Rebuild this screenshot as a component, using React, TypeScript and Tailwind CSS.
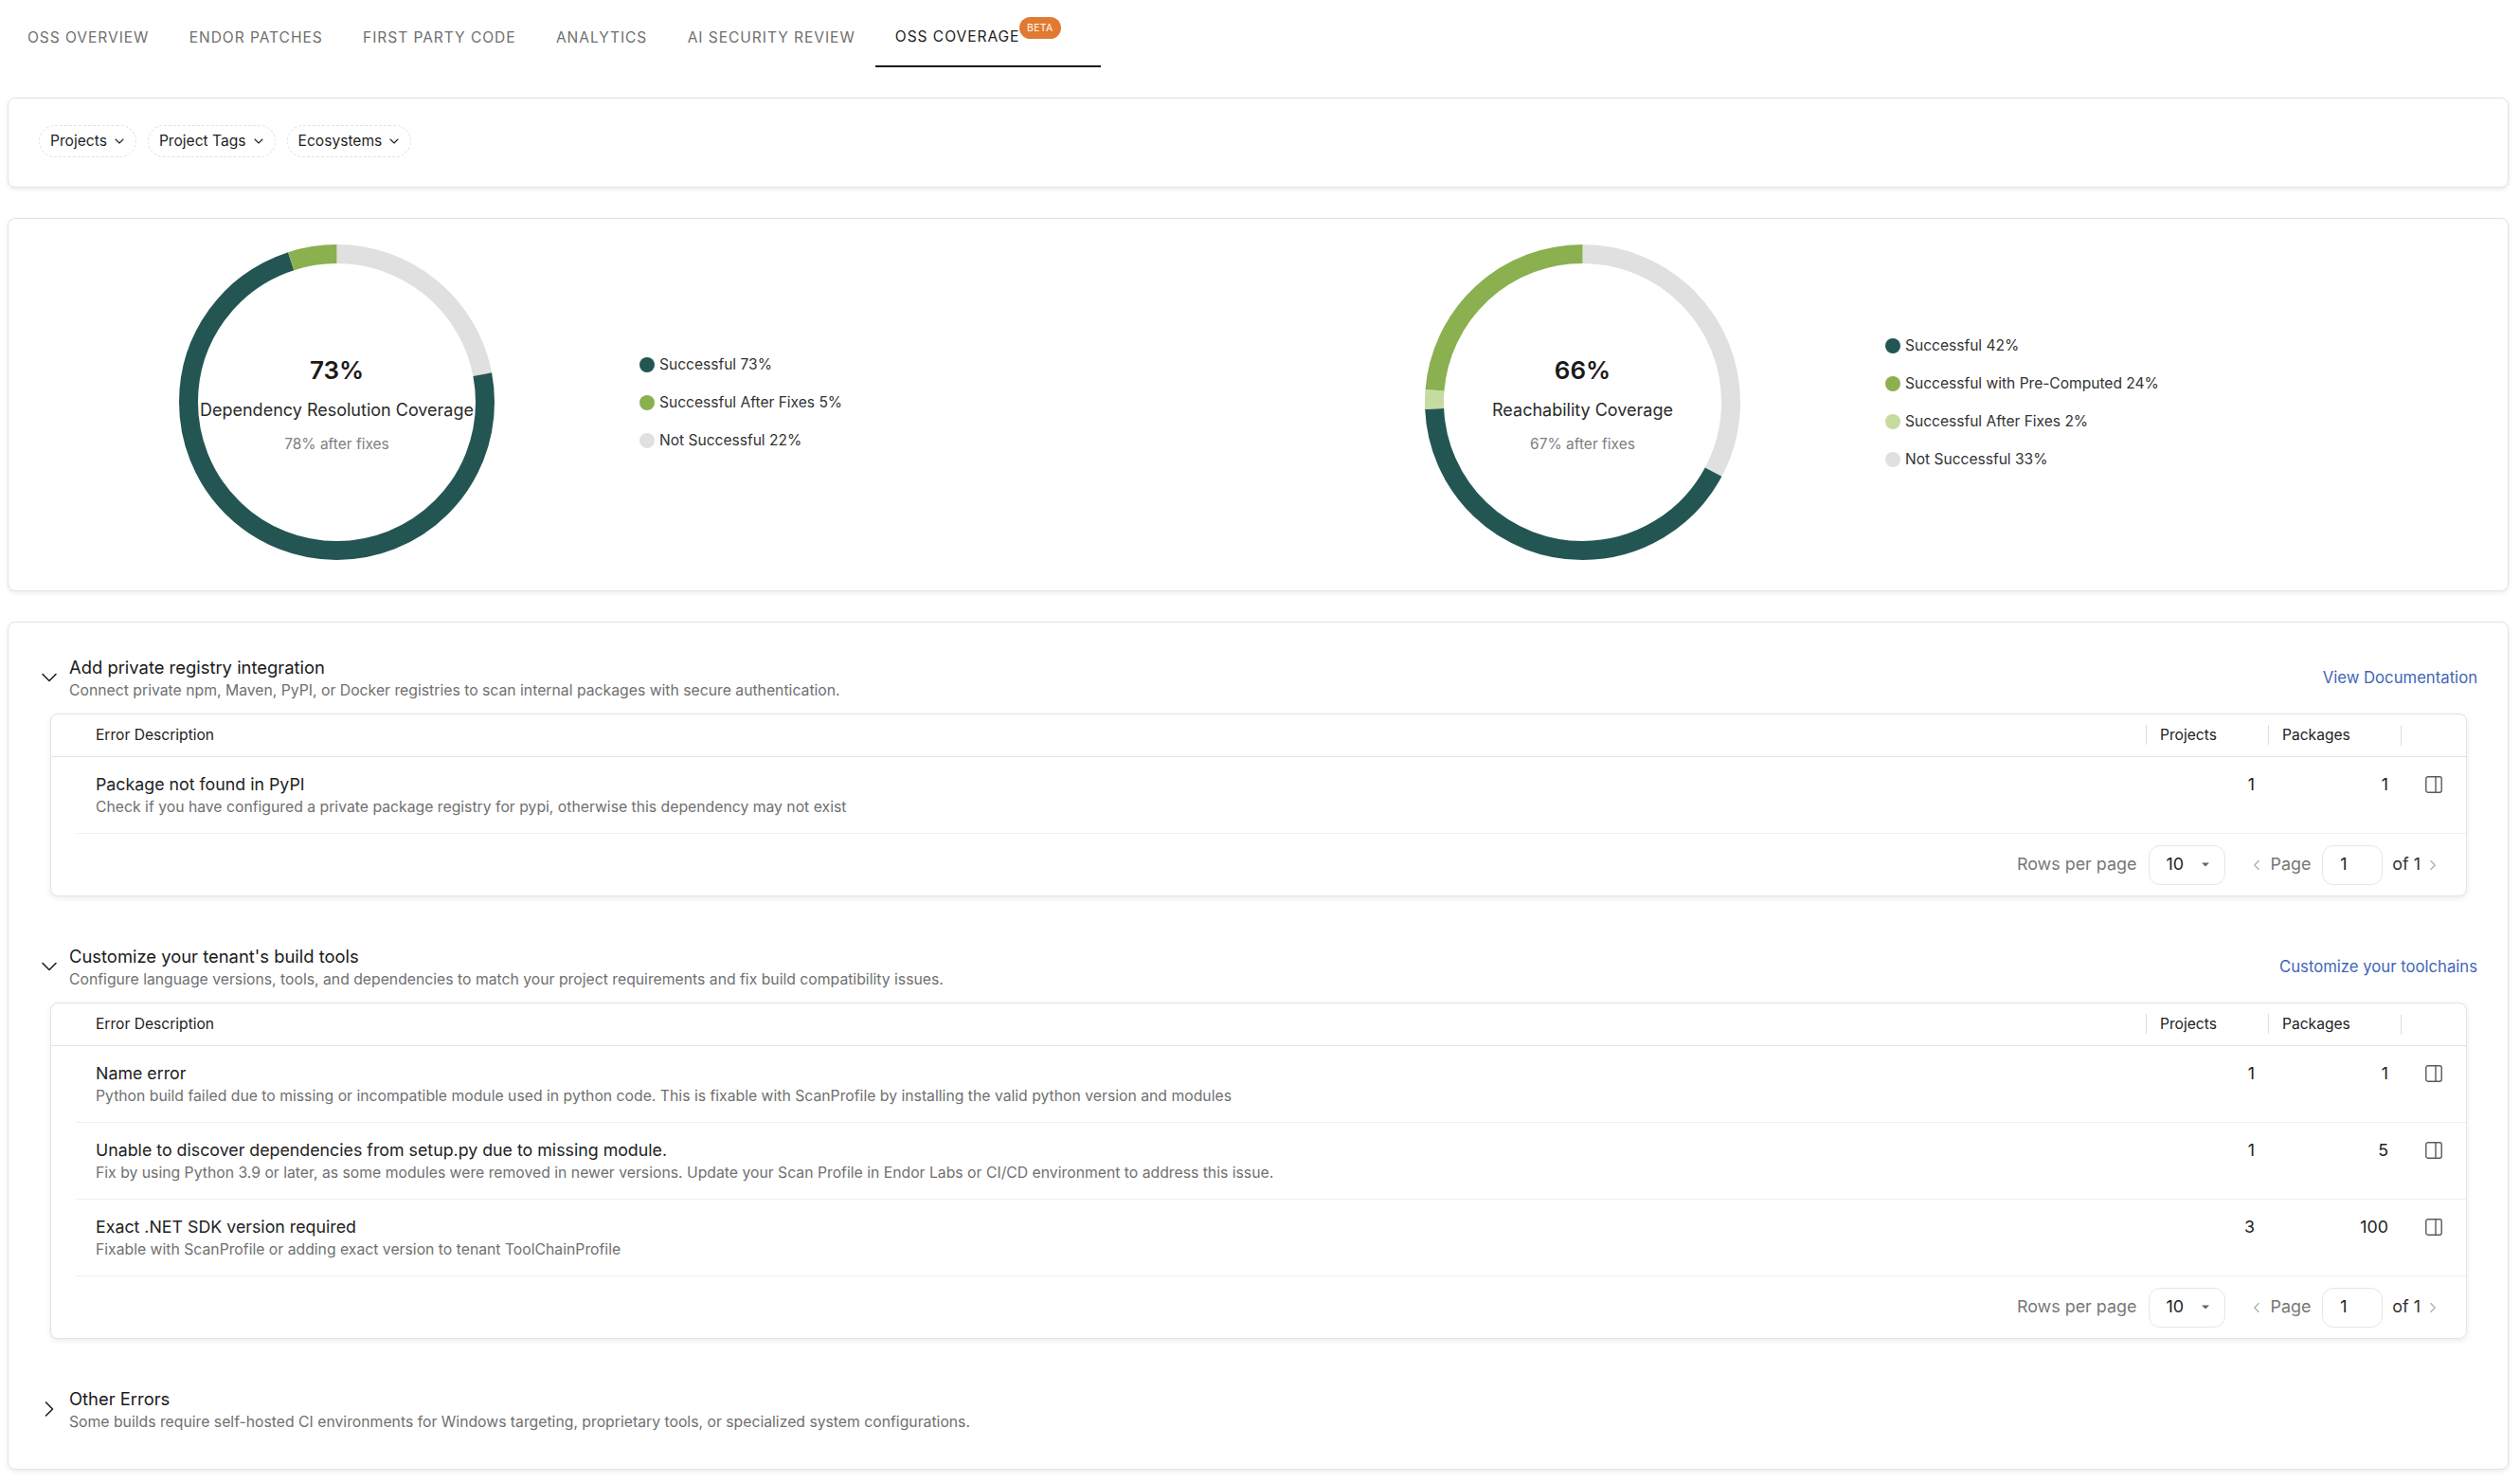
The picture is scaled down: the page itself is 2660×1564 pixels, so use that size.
import React from "react";
import { ChevronDown, ChevronLeft, ChevronRight } from "lucide-react";

const DARK = "#235653";
const GREEN = "#8AB050";
const LIGHT = "#C5DBA0";
const GRAY = "#E0E0E0";

type Seg = { color: string; from: number; to: number };

function Donut({ segs, pct, label, sub }: { segs: Seg[]; pct: string; label: string; sub: string }) {
  return (
    <div className="relative w-[333px] h-[333px] shrink-0">
      <svg width="333" height="333" viewBox="0 0 333 333" className="-rotate-90">
        {segs.map((s, i) => (
          <circle
            key={i}
            cx="166.5"
            cy="166.5"
            r="156.5"
            fill="none"
            stroke={s.color}
            strokeWidth="20"
            pathLength={100}
            strokeDasharray={`${s.to - s.from} ${100 - (s.to - s.from)}`}
            strokeDashoffset={-s.from}
          />
        ))}
      </svg>
      <div className="absolute inset-0 flex flex-col items-center justify-center pt-[4px]">
        <div className="text-[26px] leading-[32px] font-semibold text-[#1a1a1a]">{pct}</div>
        <div className="mt-[14px] text-[18px] leading-[24px] text-[#2a2a2a] whitespace-nowrap">{label}</div>
        <div className="mt-[14px] text-[15.5px] leading-[20px] text-[#808080]">{sub}</div>
      </div>
    </div>
  );
}

function Legend({ items }: { items: { color: string; text: string }[] }) {
  return (
    <div className="flex flex-col gap-[16px]">
      {items.map((it) => (
        <div key={it.text} className="flex items-center gap-[5px] h-[24px] text-[15.55px] text-[#333333] whitespace-nowrap">
          <span className="w-[16px] h-[16px] rounded-full" style={{ background: it.color }} />
          <span>{it.text}</span>
        </div>
      ))}
    </div>
  );
}

function Pill({ text }: { text: string }) {
  return (
    <button className="h-[34px] flex items-center gap-[5px] pl-[11px] pr-[9px] rounded-full border border-dashed border-[#e2e2e2] text-[15.6px] font-normal text-[#1f1f1f] whitespace-nowrap">
      {text}
      <ChevronDown size={16} strokeWidth={1.6} className="text-[#222222]" />
    </button>
  );
}

function PanelIcon() {
  return (
    <svg width="18" height="18" viewBox="0 0 18 18" fill="none" stroke="#5a5a5a" strokeWidth="1.4">
      <rect x="0.8" y="0.8" width="16.4" height="16.4" rx="2" />
      <line x1="11" y1="0.8" x2="11" y2="17.2" />
    </svg>
  );
}

type Row = { title: string; desc: string; projects: number; packages: number };

function Table({ rows }: { rows: Row[] }) {
  return (
    <div className="ml-[44px] mr-[43px] border border-[#e3e3e3] rounded-[8px] bg-white shadow-[0_2px_6px_rgba(0,0,0,0.08)]">
      <div className="h-[45px] flex items-center border-b border-[#e3e3e3] text-[15.6px] text-[#222222]">
        <div className="flex-1 pl-[47px]">Error Description</div>
        <div className="w-[129px] flex items-center gap-[14px]">
          <span className="w-px h-[21px] bg-[#dddddd]" />
          <span>Projects</span>
        </div>
        <div className="w-[140px] flex items-center gap-[14px]">
          <span className="w-px h-[21px] bg-[#dddddd]" />
          <span>Packages</span>
        </div>
        <div className="w-[69px] flex items-center">
          <span className="w-px h-[21px] bg-[#dddddd]" />
        </div>
      </div>
      {rows.map((r) => (
        <div key={r.title} className="ml-[26px] h-[81px] pt-[17px] flex items-start border-b border-[#efefef]">
          <div className="flex-1 pl-[21px]">
            <div className="text-[17.8px] leading-[24px] text-[#222222]">{r.title}</div>
            <div className="text-[15.75px] leading-[24px] text-[#707070]">{r.desc}</div>
          </div>
          <div className="w-[129px] pr-[14px] text-right text-[17.8px] leading-[24px] text-[#222222]">{r.projects}</div>
          <div className="w-[140px] pr-[13px] text-right text-[17.8px] leading-[24px] text-[#222222]">{r.packages}</div>
          <div className="w-[69px] h-[24px] pl-[26px] flex items-center">
            <PanelIcon />
          </div>
        </div>
      ))}
      <div className="h-[65px] flex items-center justify-end pr-[26px] text-[17.9px]">
        <span className="text-[#777777]">Rows per page</span>
        <div className="ml-[13px] w-[81px] h-[42px] rounded-[12px] border border-[#e6e6e6] flex items-center pl-[17px] text-[#222222]">
          <span>10</span>
          <svg width="8" height="5" viewBox="0 0 8 5" className="ml-[19px]">
            <path d="M0 0.5h8L4 4.5z" fill="#666666" />
          </svg>
        </div>
        <ChevronLeft size={18} strokeWidth={1.5} className="ml-[24px] text-[#aaaaaa]" />
        <span className="ml-[5px] text-[#777777]">Page</span>
        <div className="ml-[12px] w-[64px] h-[42px] rounded-[12px] border border-[#e6e6e6] flex items-center pl-[18px] text-[#222222]">1</div>
        <span className="ml-[10px] text-[#333333]">of 1</span>
        <ChevronRight size={18} strokeWidth={1.5} className="ml-[4px] text-[#aaaaaa]" />
      </div>
    </div>
  );
}

function SectionHead({ title, desc, link, open = true }: { title: string; desc: string; link?: string; open?: boolean }) {
  return (
    <div className="flex items-center pl-[29px] pr-[32px] h-[48px]">
      {open ? (
        <ChevronDown size={28} strokeWidth={1.4} className="text-[#222222] shrink-0 -mt-[4px]" />
      ) : (
        <ChevronRight size={28} strokeWidth={1.4} className="text-[#222222] shrink-0 -mt-[4px]" />
      )}
      <div className="flex-1 pl-[7px]">
        <div className="text-[18.4px] leading-[24px] -mt-[1px] text-[#1a1a1a]">{title}</div>
        <div className="text-[15.75px] leading-[25px] text-[#707070]">{desc}</div>
      </div>
      {link && <a className="text-[16.7px] text-[#3F66B8] -mt-[3px]">{link}</a>}
    </div>
  );
}

const tabs = ["OSS OVERVIEW", "ENDOR PATCHES", "FIRST PARTY CODE", "ANALYTICS", "AI SECURITY REVIEW"];

export default function App() {
  return (
    <div
      className="w-[2660px] h-[1564px] bg-white overflow-hidden"
      style={{ fontFamily: "Inter, 'Liberation Sans', sans-serif" }}
    >
      <div className="h-[71px] flex items-stretch pl-[7.5px]">
        {tabs.map((t) => (
          <div key={t} className="px-[21.2px] first:pl-[21.5px] flex items-center pt-[8px] text-[15.55px] tracking-[0.95px] text-[#6f6f6f] whitespace-nowrap">
            {t}
          </div>
        ))}
        <div className="relative w-[238px] pl-[21px] flex items-center pt-[8px] border-b-2 border-[#1a1a1a] text-[15.55px] tracking-[0.95px] text-[#222222] whitespace-nowrap">
          OSS COVERAGE
          <span className="absolute left-[152px] top-[18px] w-[44px] h-[23px] rounded-full bg-[#E17A31] text-white text-[10.5px] tracking-[0.3px] flex items-center justify-center">
            BETA
          </span>
        </div>
      </div>

      <div className="mt-[32px] ml-[8px] w-[2640px] h-[95px] pb-[3px] flex items-center gap-[12px] pl-[32px] bg-white border border-[#e3e3e3] rounded-[8px] shadow-[0_2px_5px_rgba(0,0,0,0.08)]">
        <Pill text="Projects" />
        <Pill text="Project Tags" />
        <Pill text="Ecosystems" />
      </div>

      <div className="mt-[32px] ml-[8px] w-[2640px] h-[394px] pb-[5px] grid grid-cols-[1315px_1fr] items-center bg-white border border-[#e3e3e3] rounded-[8px] shadow-[0_2px_5px_rgba(0,0,0,0.08)]">
        <div className="flex items-center pl-[180px] gap-[153px]">
          <Donut
            pct="73%"
            label="Dependency Resolution Coverage"
            sub="78% after fixes"
            segs={[
              { color: GRAY, from: 0, to: 22 },
              { color: DARK, from: 22, to: 95 },
              { color: GREEN, from: 95, to: 100 },
            ]}
          />
          <Legend
            items={[
              { color: DARK, text: "Successful 73%" },
              { color: GREEN, text: "Successful After Fixes 5%" },
              { color: GRAY, text: "Not Successful 22%" },
            ]}
          />
        </div>
        <div className="flex items-center pl-[180px] gap-[153px]">
          <Donut
            pct="66%"
            label="Reachability Coverage"
            sub="67% after fixes"
            segs={[
              { color: GRAY, from: 0, to: 32.8 },
              { color: DARK, from: 32.8, to: 74.3 },
              { color: LIGHT, from: 74.3, to: 76.3 },
              { color: GREEN, from: 76.3, to: 100 },
            ]}
          />
          <Legend
            items={[
              { color: DARK, text: "Successful 42%" },
              { color: GREEN, text: "Successful with Pre-Computed 24%" },
              { color: LIGHT, text: "Successful After Fixes 2%" },
              { color: GRAY, text: "Not Successful 33%" },
            ]}
          />
        </div>
      </div>

      <div className="mt-[32px] ml-[8px] w-[2640px] h-[895px] pt-[36px] bg-white border border-[#e3e3e3] rounded-[8px] shadow-[0_2px_5px_rgba(0,0,0,0.08)]">
        <SectionHead
          title="Add private registry integration"
          desc="Connect private npm, Maven, PyPI, or Docker registries to scan internal packages with secure authentication."
          link="View Documentation"
        />
        <div className="mt-[12px]">
          <Table
            rows={[
              {
                title: "Package not found in PyPI",
                desc: "Check if you have configured a private package registry for pypi, otherwise this dependency may not exist",
                projects: 1,
                packages: 1,
              },
            ]}
          />
        </div>
        <div className="mt-[52px]">
          <SectionHead
            title="Customize your tenant's build tools"
            desc="Configure language versions, tools, and dependencies to match your project requirements and fix build compatibility issues."
            link="Customize your toolchains"
          />
        </div>
        <div className="mt-[12px]">
          <Table
            rows={[
              {
                title: "Name error",
                desc: "Python build failed due to missing or incompatible module used in python code. This is fixable with ScanProfile by installing the valid python version and modules",
                projects: 1,
                packages: 1,
              },
              {
                title: "Unable to discover dependencies from setup.py due to missing module.",
                desc: "Fix by using Python 3.9 or later, as some modules were removed in newer versions. Update your Scan Profile in Endor Labs or CI/CD environment to address this issue.",
                projects: 1,
                packages: 5,
              },
              {
                title: "Exact .NET SDK version required",
                desc: "Fixable with ScanProfile or adding exact version to tenant ToolChainProfile",
                projects: 3,
                packages: 100,
              },
            ]}
          />
        </div>
        <div className="mt-[52px]">
          <SectionHead
            title="Other Errors"
            desc="Some builds require self-hosted CI environments for Windows targeting, proprietary tools, or specialized system configurations."
            open={false}
          />
        </div>
      </div>
    </div>
  );
}
